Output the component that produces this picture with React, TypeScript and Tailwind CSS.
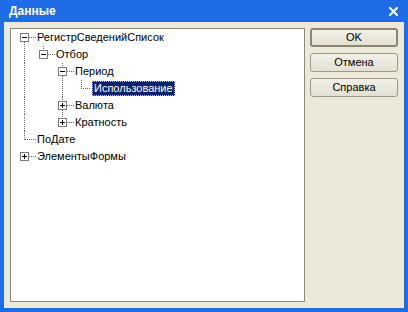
import React from 'react';

const DOT = '#6a6a6a';

function V({ x, y1, y2 }: { x: number; y1: number; y2: number }) {
  return <line x1={x + 0.5} x2={x + 0.5} y1={y1} y2={y2} stroke={DOT} strokeDasharray="1 1" />;
}

function H({ x1, x2 }: { x1: number; x2: number }) {
  return <line x1={x1} x2={x2} y1={8.5} y2={8.5} stroke={DOT} strokeDasharray="1 1" />;
}

function Box({ c, plus = false }: { c: number; plus?: boolean }) {
  return (
    <g>
      <rect x={c - 3.5} y={4.5} width={8} height={8} fill="#fff" stroke="#7b7b7b" />
      <line x1={c - 2} x2={c + 3} y1={8.5} y2={8.5} stroke="#000" />
      {plus && <line x1={c + 0.5} x2={c + 0.5} y1={6} y2={11} stroke="#000" />}
    </g>
  );
}

type Row = { text: string; left: number; selected?: boolean; draw: React.ReactNode };

const rows: Row[] = [
  {
    text: 'РегистрСведенийСписок',
    left: 26,
    draw: (
      <>
        <Box c={13} />
        <H x1={18} x2={25} />
        <V x={13} y1={13} y2={17} />
      </>
    ),
  },
  {
    text: 'Отбор',
    left: 45,
    draw: (
      <>
        <V x={13} y1={0} y2={17} />
        <V x={32} y1={0} y2={4} />
        <Box c={32} />
        <H x1={37} x2={44} />
      </>
    ),
  },
  {
    text: 'Период',
    left: 64,
    draw: (
      <>
        <V x={13} y1={0} y2={17} />
        <V x={51} y1={0} y2={4} />
        <Box c={51} />
        <V x={51} y1={13} y2={17} />
        <H x1={56} x2={63} />
      </>
    ),
  },
  {
    text: 'Использование',
    left: 81,
    selected: true,
    draw: (
      <>
        <V x={13} y1={0} y2={17} />
        <V x={51} y1={0} y2={17} />
        <V x={70} y1={0} y2={9} />
        <H x1={70} x2={80} />
      </>
    ),
  },
  {
    text: 'Валюта',
    left: 64,
    draw: (
      <>
        <V x={13} y1={0} y2={17} />
        <V x={51} y1={0} y2={4} />
        <Box c={51} plus />
        <V x={51} y1={13} y2={17} />
        <H x1={56} x2={63} />
      </>
    ),
  },
  {
    text: 'Кратность',
    left: 64,
    draw: (
      <>
        <V x={13} y1={0} y2={17} />
        <V x={51} y1={0} y2={4} />
        <Box c={51} plus />
        <H x1={56} x2={63} />
      </>
    ),
  },
  {
    text: 'ПоДате',
    left: 26,
    draw: (
      <>
        <V x={13} y1={0} y2={9} />
        <H x1={14} x2={25} />
      </>
    ),
  },
  {
    text: 'ЭлементыФормы',
    left: 26,
    draw: (
      <>
        <Box c={13} plus />
        <H x1={18} x2={25} />
      </>
    ),
  },
];

function XpButton({ label, primary = false }: { label: string; primary?: boolean }) {
  return (
    <button
      className={`h-[19px] w-[88px] rounded-[3px] bg-gradient-to-b from-[#f2f0e8] to-[#e3e0d3] text-[11px] leading-none text-black ${
        primary ? 'border-2 border-[#8a8577]' : 'border border-[#9c988b]'
      }`}
    >
      {label}
    </button>
  );
}

export default function App() {
  return (
    <div
      className="flex h-[312px] w-[408px] flex-col bg-[#1e6de6]"
      style={{ fontFamily: '"Liberation Sans", Arial, sans-serif' }}
    >
      {/* Title bar */}
      <div className="flex h-[22px] shrink-0 items-center justify-between pl-[9px] pr-[10px]">
        <span className="text-[12px] font-bold text-white">Данные</span>
        <svg width="9" height="9" viewBox="0 0 9 9">
          <path d="M1 1 L8 8 M8 1 L1 8" stroke="#fff" strokeWidth="2" strokeLinecap="square" />
        </svg>
      </div>

      {/* Client area */}
      <div className="mx-[4px] mb-[4px] flex flex-1 gap-[5px] bg-[#ece9d8] p-[6px]">
        <div className="w-[295px] border border-[#8c897e] bg-white">
          {rows.map((r) => (
            <div key={r.text} className="flex h-[17px] items-center">
              <svg width={r.left} height={17} className="shrink-0" shapeRendering="crispEdges">
                {r.draw}
              </svg>
              {r.selected ? (
                <span className="border border-dotted border-[#d9c77e] bg-[#0a246a] px-[1px] text-[11px] leading-[13px] text-white">
                  {r.text}
                </span>
              ) : (
                <span className="text-[11px] leading-[13px] text-black">{r.text}</span>
              )}
            </div>
          ))}
        </div>

        <div className="flex flex-col gap-[6px]">
          <XpButton label="OK" primary />
          <XpButton label="Отмена" />
          <XpButton label="Справка" />
        </div>
      </div>
    </div>
  );
}
